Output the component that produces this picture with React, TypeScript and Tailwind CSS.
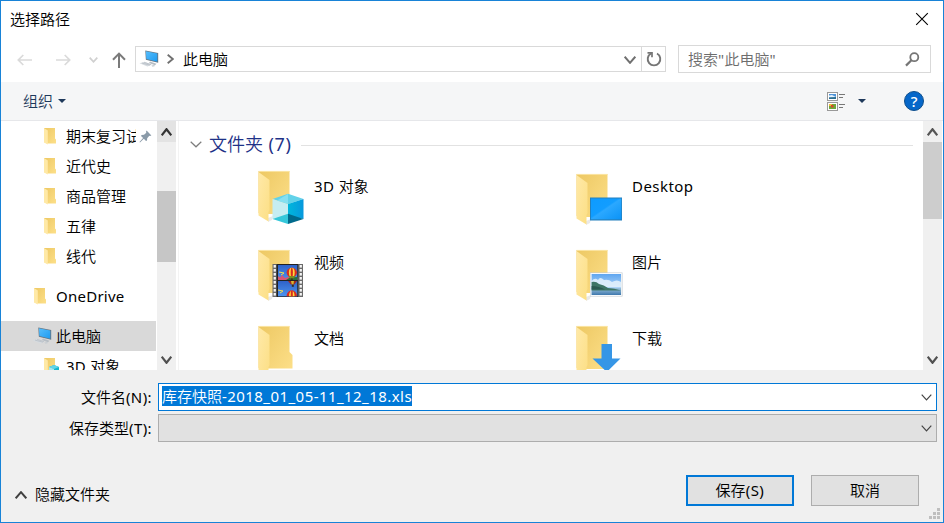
import React from "react";

type IconProps = { className?: string };

/* Mixed-script label: Chinese runs are set slightly lighter than Latin ones. */
const Label = ({ children, className = "", latin = "tracking-[0.25px]" }: { children: string; className?: string; latin?: string }) => (
  <span className={className}>
    {children.split(/([\u4e00-\u9fff]+)/).filter(Boolean).map((run, i) => (
      <span key={i} className={/[\u4e00-\u9fff]/.test(run) ? "font-[350]" : `font-normal ${latin}`}>
        {run}
      </span>
    ))}
  </span>
);

const Chevron = ({
  dir = "down",
  w = 10,
  h = 6,
  stroke = "#444",
  sw = 1.2,
  className = "",
}: {
  dir?: "up" | "down" | "right";
  w?: number;
  h?: number;
  stroke?: string;
  sw?: number;
  className?: string;
}) => {
  const d =
    dir === "down"
      ? `M0.7 0.7L${w / 2} ${h - 1.2}L${w - 0.7} 0.7`
      : dir === "up"
        ? `M0.7 ${h - 0.7}L${w / 2} 1.2L${w - 0.7} ${h - 0.7}`
        : `M0.7 0.7L${w - 1.2} ${h / 2}L0.7 ${h - 0.7}`;
  return (
    <svg width={w} height={h} className={`shrink-0 ${className}`} fill="none" stroke={stroke} strokeWidth={sw}>
      <path d={d} />
    </svg>
  );
};

const Gradients = () => (
  <svg width="0" height="0" className="absolute">
    <defs>
      <linearGradient id="back" x1="0" y1="0" x2="1" y2="1">
        <stop offset="0" stopColor="#edc863" />
        <stop offset="1" stopColor="#fde08a" />
      </linearGradient>
      <linearGradient id="flap" x1="0" y1="0" x2="1" y2="1">
        <stop offset="0" stopColor="#ffe9a8" />
        <stop offset="1" stopColor="#fcdf85" />
      </linearGradient>
      <linearGradient id="screen" x1="0" y1="0" x2="1" y2="1">
        <stop offset="0" stopColor="#56bdfb" />
        <stop offset="1" stopColor="#1e9bf0" />
      </linearGradient>
      <linearGradient id="desk" x1="0" y1="0" x2="1" y2="1">
        <stop offset="0" stopColor="#0d9bff" />
        <stop offset="0.45" stopColor="#129dff" />
        <stop offset="0.5" stopColor="#2ba8ff" />
        <stop offset="1" stopColor="#0b93f6" />
      </linearGradient>
      <linearGradient id="sky" x1="0" y1="0" x2="0" y2="1">
        <stop offset="0" stopColor="#5fa6f0" />
        <stop offset="1" stopColor="#d9edfb" />
      </linearGradient>
      <linearGradient id="lake" x1="0" y1="0" x2="0" y2="1">
        <stop offset="0" stopColor="#9cc3dd" />
        <stop offset="1" stopColor="#3f78ad" />
      </linearGradient>
      <linearGradient id="film" x1="0" y1="0" x2="0" y2="1">
        <stop offset="0" stopColor="#2f62c8" />
        <stop offset="1" stopColor="#4d93ee" />
      </linearGradient>
      <linearGradient id="cubeR" x1="0" y1="0" x2="1" y2="0">
        <stop offset="0" stopColor="#00b7dc" />
        <stop offset="1" stopColor="#0798dd" />
      </linearGradient>
    </defs>
  </svg>
);

const SmallFolder = ({ children }: { children?: React.ReactNode }) => (
  <svg width="16" height="18" viewBox="0 0 16 18" className="shrink-0">
    <path d="M1 1H12V11.5L13 12.5V16.5H4L1 15Z" fill="url(#back)" />
    <path d="M1 1L4.8 3.4V17.6L1 15.4Z" fill="#ffe9a6" />
    {children}
  </svg>
);

const MiniCube = () => (
  <g>
    <path d="M6 10L11 8L16 10V18H6Z" fill="#16b5cf" />
    <path d="M6 10L11 8L16 10L11 12Z" fill="#62d3e6" />
    <path d="M6 10L11 12V18H6Z" fill="#a6e6ef" />
  </g>
);

const Computer = ({ className = "" }: IconProps) => (
  <svg width="20" height="18" viewBox="0 0 20 18" className={`shrink-0 ${className}`}>
    <path d="M11 11.5L17.5 13.8L16 15.2L10 13Z" fill="#b6bdc4" />
    <path d="M6.3 0.6L19.2 3V12.8L6.9 9.8Z" fill="#67747f" />
    <path d="M6.9 1.2L18.3 3.5V11.7L7.4 9.1Z" fill="url(#screen)" />
    <path d="M0.5 13.2L5.5 11.8L13 14.5L8.5 16.4Z" fill="#d5dbe0" />
    <path d="M3 13.1L11 15.2M5.2 12.4L12 14.6" stroke="#aeb6bd" strokeWidth="0.6" />
    <path d="M12.3 15.6L15 15L16.2 15.9L13.6 16.8Z" fill="#c6ccd1" />
  </svg>
);

const BigFolder = ({ children, full }: { children?: React.ReactNode; full?: boolean }) => (
  <svg width="52" height="56" viewBox="0 0 52 56" className="shrink-0">
    <path d="M11 48L16 46L15 50L11 52Z" fill="#e9e9e9" />
    <path
      d={full ? "M1.5 1H32.5V27L35.5 30V43.5H11V48L1.5 43Z" : "M1.5 1H32.5V44H11V48L1.5 43Z"}
      fill="url(#back)"
    />
    <path d="M1.5 1.4H32.5" stroke="#fbe6a6" strokeWidth="1" />
    <path d="M1.5 2L12.5 10V40L11.5 42V51.5L1.5 45.5Z" fill="url(#flap)" />
    {children}
  </svg>
);

const Cube = () => (
  <g>
    <path d="M15.5 29L31 23.8L46.5 29L31 34Z" fill="#62d2e9" />
    <path d="M15.5 29L31 34V46L15.5 49Z" fill="#c6edf2" />
    <path d="M31 34L46.5 29V49L31 46Z" fill="url(#cubeR)" />
    <path d="M31 24V34L20 30.5Z" fill="#86dff0" />
    <path d="M15.5 49L31 43.8V54Z" fill="#35c7da" />
    <path d="M31 43.8L46.5 49L31 54Z" fill="#006a8c" />
  </g>
);

const DesktopBadge = () => (
  <g>
    <rect x="15" y="24.5" width="32" height="23" fill="#2480bd" />
    <rect x="16" y="25.5" width="30.3" height="20.8" fill="url(#desk)" />
  </g>
);

const FilmBadge = () => (
  <g>
    <rect x="15.5" y="15" width="30.5" height="33" fill="#6a6a6a" />
    {[0, 1, 2, 3, 4, 5, 6, 7].map((i) => (
      <g key={i} fill="#f4f4f4">
        <rect x="16.6" y={16 + i * 4} width="2.3" height="2.6" />
        <rect x="42.6" y={16 + i * 4} width="2.3" height="2.6" />
      </g>
    ))}
    <rect x="19.6" y="15" width="21.6" height="33" fill="#222" />
    <rect x="21" y="16" width="19.3" height="15" fill="url(#film)" />
    <rect x="21" y="32" width="19.3" height="15.3" fill="url(#film)" />
    <path d="M21 31V27L23 28.5L25 26L28 29L31 28L40.3 28.5V31Z" fill="#d85675" />
    <path d="M29 31L33 28.5L40.3 28V31Z" fill="#26733a" />
    <path d="M22 23L27 24L24 26" stroke="#f3dc4d" strokeWidth="1" fill="none" />
    {/* upper balloon */}
    <ellipse cx="34.8" cy="23.6" rx="5.2" ry="4.8" fill="#d92c1f" />
    <ellipse cx="34.8" cy="23.6" rx="2.9" ry="4.8" fill="#ffd83a" />
    <ellipse cx="34.8" cy="23.6" rx="1.1" ry="4.8" fill="#d92c1f" />
    <path d="M31.2 27H38.4L36.2 29.6H33.4Z" fill="#7d8a22" />
    <rect x="33.8" y="29.4" width="2" height="1.6" fill="#4a2d14" />
    {/* middle balloon, cut by the frame */}
    <path d="M31 32H40L37.4 35.4H33.8Z" fill="#a12a20" />
    <path d="M34 32H37L36.4 35.4H34.8Z" fill="#d9b82f" />
    <rect x="34.8" y="35.6" width="2" height="2.2" fill="#332b1d" />
    <path d="M21 41L26 42L23 44" stroke="#f3dc4d" strokeWidth="1" fill="none" />
    {/* lower balloon */}
    <path d="M29.6 47.3C29.6 39.6 40 39.6 40 47.3Z" fill="#d92c1f" />
    <path d="M32 47.3C32 39.8 37.6 39.8 37.6 47.3Z" fill="#ffd83a" />
    <path d="M33.8 47.3V41.6H35.8V47.3Z" fill="#d92c1f" />
  </g>
);

const PictureBadge = () => (
  <g>
    <rect x="15" y="23.5" width="32.5" height="24" fill="#c3cad0" />
    <rect x="15.5" y="24" width="31.3" height="23" fill="#f7f9fb" />
    <rect x="16.6" y="25" width="29.4" height="21" fill="url(#sky)" />
    <path d="M16.6 32Q20 28 23 31Q25 27 29 31Q34 30 37 33Q42 30 46 33V38H16.6Z" fill="#e5f2fb" opacity="0.85" />
    <rect x="16.6" y="39" width="29.4" height="7" fill="url(#lake)" />
    <path d="M16.6 33Q21 32 24 35Q29 36 33 39Q39 39 46 41.5H16.6Z" fill="#3d7566" />
    <path d="M16.6 37Q24 37 30 40.5H16.6Z" fill="#2b5a52" />
  </g>
);

const DownBadge = () => <path d="M26.5 19H37V33.5H45.5L31.8 47L17.5 33.5H26.5Z" fill="#3696e6" />;

const Pin = () => (
  <svg width="13" height="13" viewBox="0 0 13 13" className="shrink-0">
    <path d="M7.6 0.6L12.4 5.4L11 6L10.3 5.8L8.2 8.2L8 10.6L7 11L4.8 8.8L1 12.4L0.5 12L4.1 8L2 5.9L2.6 4.9L5 4.8L7.3 2.7L7 1.7Z" fill="#8a9aa8" />
  </svg>
);

const ViewIcon = () => (
  <svg width="19" height="19" viewBox="0 0 19 19">
    <rect x="0.5" y="0.5" width="10" height="8" fill="#fff" stroke="#999" />
    <rect x="2" y="2" width="7" height="5" fill="#4f93d8" />
    <path d="M2 3.5L5 3L9 5V5.5H2Z" fill="#e7f2fa" />
    <path d="M2 5.6L9 5V7H2Z" fill="#2c6e90" />
    <rect x="0.5" y="10.5" width="10" height="8" fill="#fff" stroke="#999" />
    <rect x="2" y="12" width="7" height="5" fill="#6da83d" />
    <rect x="2" y="12" width="3" height="2" fill="#f0b93a" />
    <rect x="4" y="13" width="2.5" height="2.5" fill="#d64a2b" />
    <path d="M12 2.5H18M12 5.5H16M12 12.5H18M12 15.5H16" stroke="#777" strokeWidth="1" />
  </svg>
);

const quick = ["期末复习试", "近代史", "商品管理", "五律", "线代"];

const folders: { name: string; badge: React.ReactNode; full?: boolean; lift?: boolean }[] = [
  { name: "3D 对象", badge: <Cube />, lift: true },
  { name: "Desktop", badge: <DesktopBadge /> },
  { name: "视频", badge: <FilmBadge /> },
  { name: "图片", badge: <PictureBadge /> },
  { name: "文档", badge: null, full: true },
  { name: "下载", badge: <DownBadge /> },
];

export default function App() {
  return (
    <div className="flex h-[523px] w-[944px] flex-col overflow-hidden whitespace-nowrap border border-[#1883d7] bg-white font-['Noto_Sans','Noto_Sans_CJK_SC',sans-serif] text-[15px] leading-[20px] text-black">
      <Gradients />
      {/* title bar */}
      <div className="flex h-[35px] shrink-0 items-center justify-between pl-[9px] pr-[14px]">
        <Label>选择路径</Label>
        <svg width="14" height="14" viewBox="0 0 14 14" stroke="#000" strokeWidth="1.1">
          <path d="M1.2 1.2L12.8 12.8M12.8 1.2L1.2 12.8" />
        </svg>
      </div>

      {/* navigation */}
      <div className="flex h-[46px] shrink-0 items-center pl-4 pr-3">
        <svg width="16" height="12" viewBox="0 0 16 12" fill="none" stroke="#dadada" strokeWidth="1.7" className="mt-[2px]">
          <path d="M15 6H1.5M6.3 1L1.3 6L6.3 11" />
        </svg>
        <svg width="16" height="12" viewBox="0 0 16 12" fill="none" stroke="#dadada" strokeWidth="1.7" className="ml-[22px] mt-[2px]">
          <path d="M1 6H14.5M9.7 1L14.7 6L9.7 11" />
        </svg>
        <Chevron w={9} h={6} stroke="#d0d0d0" sw={1.7} className="ml-[18px] mt-[2px]" />
        <svg width="14" height="16" viewBox="0 0 14 16" fill="none" stroke="#7a7a7a" strokeWidth="2" className="ml-[14px] mt-[2px]">
          <path d="M7 16V1.8M1 7.8L7 1.6L13 7.8" />
        </svg>
        <div className="ml-[9px] flex h-[26px] w-[531px] border border-[#d9d9d9]">
          <div className="flex flex-1 items-center pl-[3px]">
            <Computer />
            <Chevron dir="right" w={7} h={10} stroke="#707070" sw={1.8} className="ml-2" />
            <Label className="-mt-px ml-[9px]">此电脑</Label>
            <Chevron w={12} h={8} stroke="#707070" sw={2} className="ml-auto mr-[5px] mt-[2px]" />
          </div>
          <div className="flex w-[24px] items-center justify-center border-l border-[#d9d9d9]">
            <svg width="16" height="16" viewBox="0 0 16 16" fill="none" stroke="#757575" strokeWidth="1.9">
              <path d="M11 2.5A6.3 6.3 0 1 1 5 2.5" />
              <path d="M1.5 1.8H6V6.3" strokeWidth="1.7" />
            </svg>
          </div>
        </div>
        <div className="ml-3 flex h-[28px] flex-1 items-center justify-between border border-[#d9d9d9] pl-[9px] pr-[10px] text-[#6d6d6d]">
          <Label latin="tracking-[0.3px]">搜索"此电脑"</Label>
          <svg width="15" height="15" viewBox="0 0 15 15" fill="none" stroke="#757575" strokeWidth="1.8">
            <circle cx="9.3" cy="5.2" r="4" />
            <path d="M6.4 8.2L1 13.6" strokeWidth="2.2" />
          </svg>
        </div>
      </div>

      {/* command bar */}
      <div className="flex h-[39px] shrink-0 items-center border-b border-[#e6e7ea] bg-[#f5f6f7] pl-[22px] pr-[19px] text-[#1e395b]">
        <Label>组织</Label>
        <svg width="8" height="4" className="ml-[5px]"><path d="M0 0H8L4 4Z" fill="#1e395b" /></svg>
        <div className="ml-auto flex items-center">
          <ViewIcon />
          <svg width="8" height="4" className="ml-[12px] mr-[38px]"><path d="M0 0H8L4 4Z" fill="#1e395b" /></svg>
          <div className="flex size-5 items-center justify-center rounded-full border border-[#0f4f8c] bg-[#0667c9] text-[15px] font-medium leading-none text-white">?</div>
        </div>
      </div>

      {/* content */}
      <div className="flex h-[249px] shrink-0 overflow-hidden">
        <div className="w-[155px] shrink-0">
          {quick.map((n, i) => (
            <div key={n} className="flex h-[30px] items-center pl-[42px]">
              <SmallFolder />
              <Label className={`ml-[7px] ${i === 0 ? "w-[70px] overflow-hidden" : ""}`}>{n}</Label>
              {i === 0 && <span className="ml-[3px]"><Pin /></span>}
            </div>
          ))}
          <div className="mt-[10px] flex h-[30px] items-center pl-8">
            <SmallFolder />
            <Label className="ml-[7px]">OneDrive</Label>
          </div>
          <div className="mt-[10px] flex h-[30px] items-center bg-[#d9d9d9] pl-[31px]">
            <Computer />
            <Label className="ml-1">此电脑</Label>
          </div>
          <div className="flex h-[30px] items-center pl-[42px]">
            <SmallFolder><MiniCube /></SmallFolder>
            <Label className="ml-[7px]">3D 对象</Label>
          </div>
        </div>
        <div className="ml-px flex w-[19px] shrink-0 flex-col items-center bg-[#f0f0f0]">
          <div className="flex h-[21px] w-full shrink-0 items-center justify-center bg-[#e3e3e3]">
            <Chevron dir="up" w={11} h={8} stroke="#333" sw={2.2} />
          </div>
          <div className="mt-[49px] h-[71px] w-full bg-[#c6c6c6]" />
          <Chevron w={11} h={8} stroke="#505050" sw={2.2} className="mb-[6px] mt-auto" />
        </div>
        <div className="ml-[2px] flex-1 border-l border-[#f3f3f3] pl-[11px]">
          <div className="mt-[12px] flex h-6 items-center">
            <Chevron w={12} h={7} stroke="#7d7d7d" sw={1.2} className="-mt-px" />
            <Label className="-mt-[2px] ml-[7px] text-[18px] leading-6 text-[#1e3287]" latin="tracking-[0.7px]">文件夹 (7)</Label>
            <div className="ml-[9px] mr-[10px] h-px flex-1 bg-[#e2e2e2]" />
          </div>
          <div className="ml-[67px] mt-[15px] grid grid-cols-[318px_318px] auto-rows-[76px]">
            {folders.map((f) => (
              <div key={f.name} className="flex items-start">
                <div className={f.lift ? "-mt-[2px]" : "mt-px"}>
                  <BigFolder full={f.full}>{f.badge}</BigFolder>
                </div>
                <Label className="ml-[5px] mt-1" latin="tracking-[0.45px]">{f.name}</Label>
              </div>
            ))}
          </div>
        </div>
        <div className="mr-px flex w-[19px] shrink-0 flex-col items-center bg-[#f0f0f0]">
          <div className="flex h-[21px] shrink-0 items-center">
            <Chevron dir="up" w={11} h={8} stroke="#555" sw={2.2} />
          </div>
          <div className="h-[77px] w-full bg-[#cdcdcd]" />
          <Chevron w={11} h={8} stroke="#505050" sw={2.2} className="mb-[6px] mt-auto" />
        </div>
      </div>

      {/* footer */}
      <div className="flex flex-1 flex-col bg-[#f0f0f0]">
        <div className="mt-[13px] flex h-7 items-center pr-[6px]">
          <Label className="w-[151px] text-right" latin="tracking-[0.4px]">文件名(N):</Label>
          <div className="ml-[6px] flex h-7 flex-1 items-center border border-[#0078d7] bg-white pl-[3px] pr-1">
            <Label className="-mt-[2px] h-5 bg-[#0078d7] text-white" latin="tracking-[0.44px]">库存快照-2018_01_05-11_12_18.xls</Label>
            <Chevron w={11} h={7} className="ml-auto" />
          </div>
        </div>
        <div className="mt-[3px] flex h-7 items-center pr-[6px]">
          <Label className="w-[151px] text-right" latin="tracking-[0.4px]">保存类型(T):</Label>
          <div className="ml-[6px] flex h-7 flex-1 items-center justify-end border border-[#adadad] bg-[#e1e1e1] pr-1">
            <Chevron w={11} h={7} />
          </div>
        </div>
        <div className="mt-[33px] flex h-[31px] items-center pl-[14px] pr-6">
          <Chevron dir="up" w={12} h={8} stroke="#404040" sw={2} className="mt-2" />
          <Label className="ml-2 mt-[6px]">隐藏文件夹</Label>
          <button className="ml-auto h-[31px] w-[108px] border-2 border-[#0078d7] bg-[#e1e1e1] pb-[2px]"><Label latin="tracking-[0.5px]">保存(S)</Label></button>
          <button className="ml-[17px] h-[31px] w-[108px] border border-[#adadad] bg-[#e1e1e1] pb-[2px]"><Label>取消</Label></button>
        </div>
        <svg width="11" height="11" className="mb-[3px] ml-auto mr-[3px] mt-auto shrink-0" fill="#bfbfbf">
          <path d="M8 0h3v3h-3zM4 4h3v3h-3zM8 4h3v3h-3zM0 8h3v3h-3zM4 8h3v3h-3zM8 8h3v3h-3z" />
        </svg>
      </div>
    </div>
  );
}
